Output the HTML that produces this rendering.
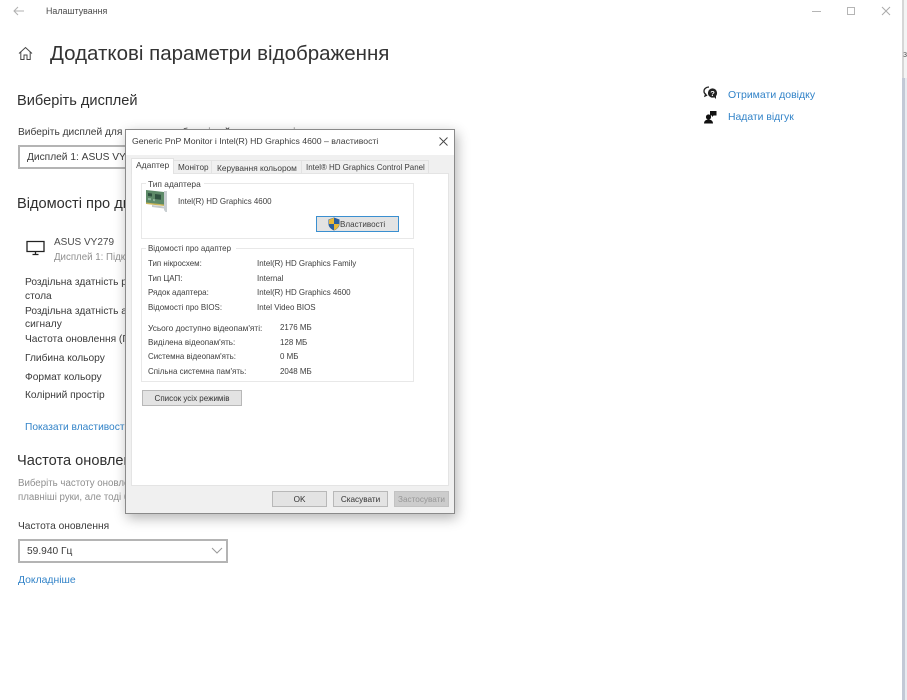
<!DOCTYPE html>
<html><head><meta charset="utf-8">
<style>
html,body{margin:0;padding:0;width:907px;height:700px;overflow:hidden;background:#fff;}
body{font-family:"Liberation Sans",sans-serif;position:relative;color:#333;}
#w{position:absolute;left:0;top:0;width:907px;height:700px;filter:blur(.3px);}
.t{position:absolute;white-space:nowrap;line-height:1;margin-top:1px;}
.n{margin-top:0;}
.b{position:absolute;box-sizing:border-box;}
.d{font-size:7.950px;color:#3d3d3d;}
.m{font-size:10.2px;color:#3a3a3a;}
.h{font-size:14.6px;color:#2f2f2f;}
.l{font-size:10.4px;color:#3283c8;}
.g{font-size:9.7px;color:#8f8f8f;}
.btn{position:absolute;box-sizing:border-box;background:#e3e3e3;border:1px solid #b8b8b8;font-size:8.2px;color:#333;text-align:center;}
</style></head><body><div id="w">
<!-- right edge -->
<div class="b" style="left:902px;top:0;width:5px;height:78px;background:#f4f4f4"></div>
<div class="b" style="left:902px;top:0;width:2px;height:78px;background:#d6d6d6"></div>
<div class="b" style="left:902px;top:78px;width:5px;height:622px;background:#e9ebf0"></div>
<div class="b" style="left:902px;top:78px;width:3px;height:622px;background:#c3c9d6"></div>
<div class="t n" style="left:903px;top:50px;font-size:9px;color:#666">з</div>

<!-- title bar -->
<svg class="b" style="left:12px;top:5px" width="14" height="12" viewBox="0 0 14 12"><path d="M12 6H2M6 2L2 6l4 4" fill="none" stroke="#b0b0b0" stroke-width="1"/></svg>
<div class="t n" style="left:46px;top:6.5px;font-size:8.9px;color:#4a4a4a">Налаштування</div>
<div class="b" style="left:812px;top:10.5px;width:9px;height:1px;background:#b5b5b5"></div>
<div class="b" style="left:847px;top:7px;width:8px;height:8px;border:1px solid #b5b5b5"></div>
<svg class="b" style="left:881px;top:6px" width="10" height="10" viewBox="0 0 10 10"><path d="M1 1l8 8M9 1L1 9" stroke="#aaa" stroke-width="1" fill="none"/></svg>

<!-- header -->
<svg class="b" style="left:18px;top:46px" width="15" height="15" viewBox="0 0 15 15"><path d="M1 7.500L7.500 1.500 14 7.500M2.800 6V13.500H6V9H9V13.500H12.200V6" fill="none" stroke="#444" stroke-width="1"/></svg>
<div class="t" style="left:50px;top:43px;font-size:20.5px;color:#333">Додаткові параметри відображення</div>

<div class="t h" style="left:17px;top:93px;">Виберіть дисплей</div>
<div class="t m" style="left:18px;top:127px;">Виберіть дисплей для перегляду або зміни його параметрів</div>
<div class="b" style="left:18px;top:145px;width:210px;height:24px;border:2px solid #b4b4b4;"></div>
<div class="t m" style="left:27px;top:152px;">Дисплей 1: ASUS VY279</div>

<div class="t h" style="left:17px;top:196px;">Відомості про дисплей</div>
<svg class="b" style="left:26px;top:240px" width="20" height="16" viewBox="0 0 20 16"><path d="M1 1.500h17v10H1zM9.500 11.500v2.500M6.500 14.500h6" fill="none" stroke="#222" stroke-width="1.300"/></svg>
<div class="t n" style="left:54px;top:238px;font-size:10px;color:#4a4a4a">ASUS VY279</div>
<div class="t g n" style="left:54px;top:253px;">Дисплей 1: Підключено</div>

<div class="t m" style="left:25px;top:277px;">Роздільна здатність робочого</div>
<div class="t m" style="left:25px;top:291px;">стола</div>
<div class="t m" style="left:25px;top:306px;">Роздільна здатність активного</div>
<div class="t m" style="left:25px;top:319px;">сигналу</div>
<div class="t m" style="left:25px;top:334px;">Частота оновлення (Гц)</div>
<div class="t m" style="left:25px;top:352.500px;">Глибина кольору</div>
<div class="t m" style="left:25px;top:371.500px;">Формат кольору</div>
<div class="t m" style="left:25px;top:390px;">Колірний простір</div>
<div class="t l" style="left:25px;top:422px;font-size:10.2px;">Показати властивості адаптера</div>

<div class="t h" style="left:17px;top:453px;">Частота оновлення</div>
<div class="t g" style="left:18px;top:478px;">Виберіть частоту оновлення для дисплея</div>
<div class="t g" style="left:18px;top:491.500px;">плавніші руки, але тоді більше енергії</div>
<div class="t m" style="left:18px;top:521px;">Частота оновлення</div>
<div class="b" style="left:18px;top:539px;width:210px;height:24px;border:2px solid #b4b4b4;"></div>
<div class="t m" style="left:27px;top:546px;">59.940 Гц</div>
<svg class="b" style="left:211px;top:546px" width="12" height="9" viewBox="0 0 12 9"><path d="M1 2l5 5 5-5" fill="none" stroke="#999" stroke-width="1"/></svg>
<div class="t l" style="left:18px;top:575px;">Докладніше</div>

<!-- right links -->
<svg class="b" style="left:703px;top:86px" width="15" height="14" viewBox="0 0 15 14"><path d="M6 1C3 1 1 3 1 5.200c0 1.300.7 2.400 1.600 3L2 10l2.200-1" fill="none" stroke="#222" stroke-width="1.300"/><circle cx="9.500" cy="7" r="4.600" fill="#222"/><path d="M11 11l2 2V9z" fill="#222"/><text x="9.500" y="10" font-size="7.500" font-weight="bold" fill="#fff" text-anchor="middle" font-family="Liberation Sans">?</text></svg>
<div class="t l" style="left:728px;top:88.500px;font-size:10.500px;">Отримати довідку</div>
<svg class="b" style="left:704px;top:110px" width="13" height="14" viewBox="0 0 13 14"><circle cx="4.500" cy="7" r="2.600" fill="#111"/><path d="M0 13.500c0-2.600 2-4 4.500-4s4.500 1.400 4.500 4z" fill="#111"/><path d="M6 1h6.500v4.500H9.500L8 7V5.500H6z" fill="#111"/></svg>
<div class="t l" style="left:728px;top:111.500px;">Надати відгук</div>

<!-- dialog -->
<div class="b" style="left:125px;top:129px;width:330px;height:385px;background:#f0f0f0;border:1px solid #8a8a8a;box-shadow:2px 4px 12px rgba(0,0,0,.3);"></div>
<div class="b" style="left:126px;top:130px;width:328px;height:25px;background:#fff"></div>
<div class="t n" style="left:132px;top:137px;font-size:8.700px;color:#3d3d3d">Generic PnP Monitor і Intel(R) HD Graphics 4600 – властивості</div>
<svg class="b" style="left:439px;top:137px" width="9" height="9" viewBox="0 0 9 9"><path d="M.5.500l8 8M8.500.500l-8 8" stroke="#444" stroke-width=".9" fill="none"/></svg>

<!-- tab panel -->
<div class="b" style="left:131px;top:173px;width:318px;height:313px;background:#fff;border:1px solid #e4e4e4"></div>
<div class="b" style="left:131px;top:158px;width:43px;height:16px;background:#fff;border:1px solid #e2e2e2;border-bottom:none"></div>
<div class="t n" style="left:136px;top:161px;font-size:8.500px;color:#3d3d3d">Адаптер</div>
<div class="b" style="left:174px;top:160px;width:38px;height:13px;background:#f0f0f0;border:1px solid #e2e2e2;border-bottom:none;border-left:none"></div>
<div class="t d" style="left:178px;top:162.500px;font-size:8.200px;">Монітор</div>
<div class="b" style="left:212px;top:160px;width:90px;height:13px;background:#f0f0f0;border:1px solid #e2e2e2;border-bottom:none;border-left:none"></div>
<div class="t d" style="left:217px;top:162.500px;font-size:8.300px;">Керування кольором</div>
<div class="b" style="left:302px;top:160px;width:127px;height:13px;background:#f0f0f0;border:1px solid #e2e2e2;border-bottom:none;border-left:none"></div>
<div class="t d" style="left:306px;top:162.500px;">Intel® HD Graphics Control Panel</div>

<!-- group 1 -->
<div class="b" style="left:141px;top:183px;width:273px;height:56px;border:1px solid #e8e8e8"></div>
<div class="b" style="left:146px;top:179px;width:58px;height:10px;background:#fff"></div>
<div class="t d n" style="left:148px;top:179.500px;font-size:8.400px;">Тип адаптера</div>
<svg class="b" style="left:146px;top:190px" width="23" height="23" viewBox="0 0 23 23"><path d="M0 0l18 2v13L0 13z" fill="#5d8a68"/><path d="M2 3l4 .5v3l-4-.5zM9 4l6 .7v5L9 9z" fill="#2f5240"/><path d="M7 9l2 .2v2l-2-.2zM2 8l3 .3v2l-3-.3z" fill="#8fb29a"/><path d="M0 12.500l18 2V16L0 14z" fill="#c9b458"/><path d="M18 1h3v21h-1.500L18 20z" fill="#c8ced1"/><path d="M6 15l12 1.500v2L6 17z" fill="#c5cacc"/></svg>
<div class="t d" style="left:178px;top:196.500px;">Intel(R) HD Graphics 4600</div>
<div class="b" style="left:316px;top:216px;width:83px;height:16px;background:#e3e3e3;border:1.500px solid #3a8fd0"></div>
<svg class="b" style="left:328px;top:217px" width="12" height="14" viewBox="0 0 12 14"><path d="M6 .5L11.500 2.500V7c0 3-2.500 5.200-5.500 6.500C3 12.200.5 10 .5 7V2.500z" fill="#2a5f9e"/><path d="M6 7h5.200c-.1 2.800-2.500 5-5.200 6.200z" fill="#e9b93a"/><path d="M6 .8L1 2.700V7h5z" fill="#e9b93a"/></svg>
<div class="t d" style="left:340px;top:219.500px;font-size:8.100px;">Властивості</div>

<!-- group 2 -->
<div class="b" style="left:141px;top:248px;width:273px;height:134px;border:1px solid #e8e8e8"></div>
<div class="b" style="left:146px;top:243px;width:90px;height:10px;background:#fff"></div>
<div class="t d" style="left:148px;top:244px;">Відомості про адаптер</div>
<div class="t d" style="left:148px;top:259px;">Тип нікросхем:</div><div class="t d" style="left:257px;top:259px;">Intel(R) HD Graphics Family</div>
<div class="t d" style="left:148px;top:273.500px;">Тип ЦАП:</div><div class="t d" style="left:257px;top:273.500px;">Internal</div>
<div class="t d" style="left:148px;top:288px;">Рядок адаптера:</div><div class="t d" style="left:257px;top:288px;">Intel(R) HD Graphics 4600</div>
<div class="t d" style="left:148px;top:303px;">Відомості про BIOS:</div><div class="t d" style="left:257px;top:303px;">Intel Video BIOS</div>
<div class="t d" style="left:148px;top:322.500px;font-size:8.300px;">Усього доступно відеопам'яті:</div><div class="t d" style="left:280px;top:322.500px;">2176 МБ</div>
<div class="t d" style="left:148px;top:337.500px;font-size:8.100px;">Виділена відеопам'ять:</div><div class="t d" style="left:280px;top:337.500px;">128 МБ</div>
<div class="t d" style="left:148px;top:352px;">Системна відеопам'ять:</div><div class="t d" style="left:280px;top:352px;">0 МБ</div>
<div class="t d" style="left:148px;top:366.500px;">Спільна системна пам'ять:</div><div class="t d" style="left:280px;top:366.500px;">2048 МБ</div>

<div class="btn" style="left:142px;top:390px;width:100px;height:16px;line-height:15px;font-size:8px;">Список усіх режимів</div>

<div class="btn" style="left:272px;top:491px;width:55px;height:16px;line-height:15px;">OK</div>
<div class="btn" style="left:333px;top:491px;width:55px;height:16px;line-height:15px;">Скасувати</div>
<div class="btn" style="left:394px;top:491px;width:55px;height:16px;line-height:15px;background:#ccc;border-color:#c2c2c2;color:#969696;">Застосувати</div>
</div></body></html>
